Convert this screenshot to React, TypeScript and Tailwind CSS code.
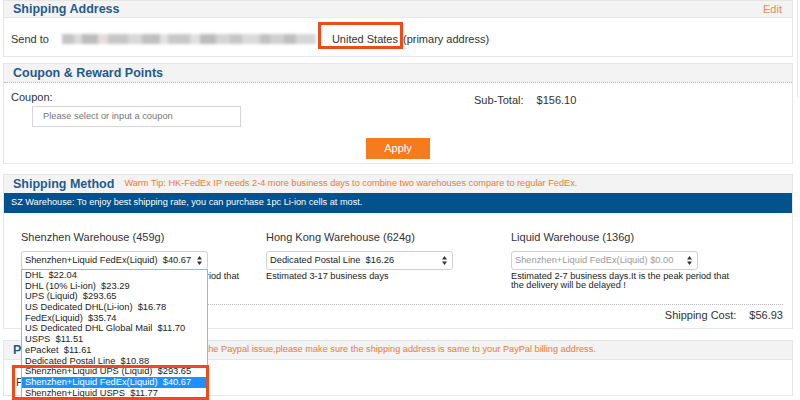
import React from 'react';

const shenzhenOptions = [
    'DHL  $22.04',
    'DHL (10% Li-ion)  $23.29',
    'UPS (Liquid)  $293.65',
    'US Dedicated DHL(Li-ion)  $16.78',
    'FedEx(Liquid)  $35.74',
    'US Dedicated DHL Global Mail  $11.70',
    'USPS  $11.51',
    'ePacket  $11.61',
    'Dedicated Postal Line  $10.88',
    'Shenzhen+Liquid UPS (Liquid)  $293.65',
    'Shenzhen+Liquid FedEx(Liquid)  $40.67',
    'Shenzhen+Liquid USPS  $11.77',
];

// blurred-out street address
const smudges: [number, string][] = [
    [12, '#c4c4c4'], [8, '#dadada'], [16, '#bdbdbd'], [10, '#e6dcdc'], [20, '#c6c6c6'],
    [14, '#d8d8d8'], [18, '#c0c0c0'], [8, '#e2e2e2'], [22, '#c8c8c8'], [10, '#e0e0e0'],
    [16, '#bcbcbc'], [14, '#d4d4d4'], [12, '#c6c6c6'], [18, '#dadada'], [10, '#c2c2c2'],
    [14, '#d0d0d0'], [12, '#bfbfbf'], [20, '#d6d6d6'],
];

function Arrows() {
    return (
        <svg width="5" height="9" viewBox="0 0 5 9" className="shrink-0">
            <path d="M2.5 0 L5 3.5 H0 Z M2.5 9 L0 5.5 H5 Z" fill="#333"/>
        </svg>
    );
}

interface WarehouseProps {
    title: string
    value: string
    estimate: string
    disabled?: boolean
}

function Warehouse({title, value, estimate, disabled}: WarehouseProps) {
    return (
        <div>
            <div className="text-[11px] leading-[14px] text-[#333]">{title}</div>
            <div className="mt-[7px] w-[187px] h-[19px] border border-[#d0d0d0] rounded-[3px] bg-white flex items-center justify-between pl-[3px] pr-[5px]">
                <span className={disabled ? 'text-[9.3px] whitespace-pre text-[#9a9a9a]' : 'text-[9.3px] whitespace-pre text-[#222]'}>{value}</span>
                <Arrows/>
            </div>
            <div className="mt-[2px] w-[225px] text-[9.2px] leading-[8.5px] text-[#222]">{estimate}</div>
        </div>
    );
}

export default function App() {
    const estimate = 'Estimated 2-7 business days.It is the peak period that the delivery will be delayed !';

    return (
        <div className="relative w-[800px] h-[400px] overflow-hidden bg-white font-['Liberation_Sans',Arial,sans-serif] text-[#333]">
            <div className="flex">
                <div className="ml-[3px] w-[790px]">

                    {/* Shipping Address */}
                    <div className="border border-[#e6e6e6] bg-white">
                        <div className="h-[17px] bg-[#f3f3f3] border-b border-[#e6e6e6] flex items-center justify-between pl-[9px] pr-[10px]">
                            <span className="text-[12.5px] font-bold text-[#1f5b8e]">Shipping Address</span>
                            <span className="text-[11px] text-[#f0884a]">Edit</span>
                        </div>
                        <div className="h-[38px] pt-[4px] pl-[7px] flex items-center text-[11px]">
                            <span>Send to</span>
                            <div className="ml-[13px] w-[254px] h-[10px] flex blur-[1.5px]">
                                {smudges.map(([w, c], i) => (
                                    <div key={i} className="h-full" style={{width: w + 'px', backgroundColor: c}}/>
                                ))}
                            </div>
                            <span className="ml-[16px]">United States</span>
                            <span className="ml-[5px]">(primary address)</span>
                        </div>
                    </div>

                    {/* Coupon */}
                    <div className="mt-[6px] border border-[#e6e6e6] bg-white">
                        <div className="h-[19px] bg-[#f3f3f3] border-b border-dotted border-[#b8b8b8] flex items-center pl-[9px]">
                            <span className="text-[12.5px] font-bold text-[#1f5b8e]">Coupon &amp; Reward Points</span>
                        </div>
                        <div className="h-[80px] pt-[8px] px-[7px] text-[11px]">
                            <div className="flex">
                                <div className="w-[463px]">
                                    <div className="leading-[13px]">Coupon:</div>
                                    <div className="ml-[21px] mt-[2px] w-[209px] h-[21px] border border-[#d6d6d6] flex items-center pl-[10px] text-[9.3px] text-[#777]">
                                        Please select or input a coupon
                                    </div>
                                </div>
                                <div className="pt-[3px] leading-[13px] flex gap-[13px]">
                                    <span>Sub-Total:</span>
                                    <span>$156.10</span>
                                </div>
                            </div>
                            <div className="mt-[11px] flex justify-center">
                                <button className="w-[64px] h-[21px] bg-[#f57b1c] text-white text-[11px] leading-none">Apply</button>
                            </div>
                        </div>
                    </div>

                    {/* Shipping Method */}
                    <div className="mt-[10px] border border-[#e6e6e6] bg-white">
                        <div className="h-[18px] bg-[#f3f3f3] flex items-center pl-[9px]">
                            <span className="text-[12.5px] font-bold text-[#1f5b8e]">Shipping Method</span>
                            <span className="ml-[10px] text-[9.2px] text-[#f07a30]">Warm Tip: HK-FedEx IP needs 2-4 more business days to combine two warehouses compare to regular FedEx.</span>
                        </div>
                        <div className="h-[20px] bg-[#02528d] flex items-center pl-[7px] text-[9.2px] text-white">
                            SZ Warehouse: To enjoy best shipping rate, you can purchase 1pc Li-ion cells at most.
                        </div>
                        <div className="h-[115px] pt-[17px]">
                            <div className="pl-[17px] grid grid-cols-[245px_245px_245px]">
                                <Warehouse title="Shenzhen Warehouse (459g)" value="Shenzhen+Liquid FedEx(Liquid)  $40.67" estimate={estimate}/>
                                <Warehouse title="Hong Kong Warehouse (624g)" value="Dedicated Postal Line  $16.26" estimate="Estimated 3-17 business days"/>
                                <Warehouse title="Liquid Warehouse (136g)" value="Shenzhen+Liquid FedEx(Liquid) $0.00" estimate={estimate} disabled/>
                            </div>
                            <div className="mt-[15px] ml-[17px] mr-[9px] border-b border-dotted border-[#b8b8b8]"/>
                            <div className="mt-[3px] pr-[9px] flex justify-end gap-[13px] text-[11px] leading-[14px]">
                                <span>Shipping Cost:</span>
                                <span>$56.93</span>
                            </div>
                        </div>
                    </div>

                    {/* Payment */}
                    <div className="mt-[11px] border border-[#e6e6e6] bg-white">
                        <div className="h-[19px] bg-[#f3f3f3] border-b border-[#e6e6e6] flex items-center pl-[9px]">
                            <span className="text-[12.5px] font-bold text-[#1f5b8e]">Payment Method</span>
                            <span className="ml-[12px] text-[9.2px] text-[#f07a30]">Warm Tip: To avoid the Paypal issue,please make sure the shipping address is same to your PayPal billing address.</span>
                        </div>
                        <div className="h-[35px] pt-[9px] pl-[12px] flex items-center text-[11px]">
                            <span>PayPal</span>
                        </div>
                    </div>
                </div>
                <div className="ml-[4px] h-[97px] flex-1 border-l border-[#e6e6e6]"/>
            </div>

            {/* open select list */}
            <div className="absolute left-[21px] top-[269px] w-[187px] h-[140px] border border-[#a3b5cb] bg-white">
                {shenzhenOptions.map((o, i) => (
                    <div key={o} className={i === 10
                        ? 'h-[10.7px] pl-[3px] text-[9.3px] leading-[10.7px] whitespace-pre bg-[#1e90ff] text-white'
                        : 'h-[10.7px] pl-[3px] text-[9.3px] leading-[10.7px] whitespace-pre text-[#222]'}>
                        {o}
                    </div>
                ))}
            </div>

            {/* highlight boxes */}
            <div className="absolute left-[318px] top-[22px] w-[85px] h-[27px] border-[3px] border-[#ec4b1c]"/>
            <div className="absolute left-[12px] top-[365px] w-[197px] h-[35px] border-[3px] border-[#ec4b1c]"/>
        </div>
    );
}
